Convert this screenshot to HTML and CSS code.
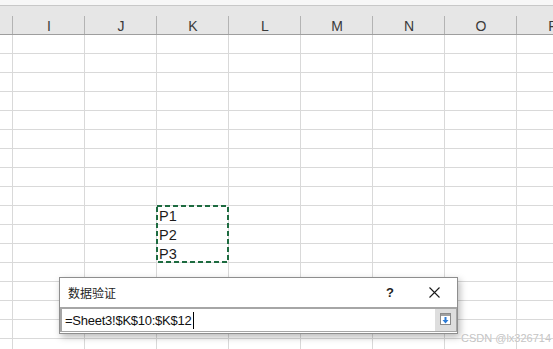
FILE: index.html
```html
<!DOCTYPE html>
<html lang="zh-CN">

<head>
  <meta charset="UTF-8">
  <meta name="viewport" content="width=device-width, initial-scale=1.0">
  <title>数据验证</title>

  <link rel="stylesheet" href="styles.css">
</head>

<body>
  <main class="sheet">
    <div class="ribbon-edge"></div>

    <div class="col-heads">
      <div class="col-head"></div>
      <div class="col-head">I</div>
      <div class="col-head">J</div>
      <div class="col-head">K</div>
      <div class="col-head">L</div>
      <div class="col-head">M</div>
      <div class="col-head">N</div>
      <div class="col-head">O</div>
      <div class="col-head">P</div>
    </div>

    <div class="grid">
      <div class="row"><div class="cell"></div><div class="cell"></div><div class="cell"></div><div class="cell"></div><div class="cell"></div><div class="cell"></div><div class="cell"></div><div class="cell"></div><div class="cell"></div></div>
      <div class="row"><div class="cell"></div><div class="cell"></div><div class="cell"></div><div class="cell"></div><div class="cell"></div><div class="cell"></div><div class="cell"></div><div class="cell"></div><div class="cell"></div></div>
      <div class="row"><div class="cell"></div><div class="cell"></div><div class="cell"></div><div class="cell"></div><div class="cell"></div><div class="cell"></div><div class="cell"></div><div class="cell"></div><div class="cell"></div></div>
      <div class="row"><div class="cell"></div><div class="cell"></div><div class="cell"></div><div class="cell"></div><div class="cell"></div><div class="cell"></div><div class="cell"></div><div class="cell"></div><div class="cell"></div></div>
      <div class="row"><div class="cell"></div><div class="cell"></div><div class="cell"></div><div class="cell"></div><div class="cell"></div><div class="cell"></div><div class="cell"></div><div class="cell"></div><div class="cell"></div></div>
      <div class="row"><div class="cell"></div><div class="cell"></div><div class="cell"></div><div class="cell"></div><div class="cell"></div><div class="cell"></div><div class="cell"></div><div class="cell"></div><div class="cell"></div></div>
      <div class="row"><div class="cell"></div><div class="cell"></div><div class="cell"></div><div class="cell"></div><div class="cell"></div><div class="cell"></div><div class="cell"></div><div class="cell"></div><div class="cell"></div></div>
      <div class="row"><div class="cell"></div><div class="cell"></div><div class="cell"></div><div class="cell"></div><div class="cell"></div><div class="cell"></div><div class="cell"></div><div class="cell"></div><div class="cell"></div></div>
      <div class="row"><div class="cell"></div><div class="cell"></div><div class="cell"></div><div class="cell"></div><div class="cell"></div><div class="cell"></div><div class="cell"></div><div class="cell"></div><div class="cell"></div></div>
      <div class="row"><div class="cell"></div><div class="cell"></div><div class="cell"></div><div class="cell val">P1</div><div class="cell"></div><div class="cell"></div><div class="cell"></div><div class="cell"></div><div class="cell"></div></div>
      <div class="row"><div class="cell"></div><div class="cell"></div><div class="cell"></div><div class="cell val">P2</div><div class="cell"></div><div class="cell"></div><div class="cell"></div><div class="cell"></div><div class="cell"></div></div>
      <div class="row"><div class="cell"></div><div class="cell"></div><div class="cell"></div><div class="cell val">P3</div><div class="cell"></div><div class="cell"></div><div class="cell"></div><div class="cell"></div><div class="cell"></div></div>
      <div class="row"><div class="cell"></div><div class="cell"></div><div class="cell"></div><div class="cell"></div><div class="cell"></div><div class="cell"></div><div class="cell"></div><div class="cell"></div><div class="cell"></div></div>
      <div class="row"><div class="cell"></div><div class="cell"></div><div class="cell"></div><div class="cell"></div><div class="cell"></div><div class="cell"></div><div class="cell"></div><div class="cell"></div><div class="cell"></div></div>
      <div class="row"><div class="cell"></div><div class="cell"></div><div class="cell"></div><div class="cell"></div><div class="cell"></div><div class="cell"></div><div class="cell"></div><div class="cell"></div><div class="cell"></div></div>
      <div class="row"><div class="cell"></div><div class="cell"></div><div class="cell"></div><div class="cell"></div><div class="cell"></div><div class="cell"></div><div class="cell"></div><div class="cell"></div><div class="cell"></div></div>
      <div class="row"><div class="cell"></div><div class="cell"></div><div class="cell"></div><div class="cell"></div><div class="cell"></div><div class="cell"></div><div class="cell"></div><div class="cell"></div><div class="cell"></div></div>
    </div>

    <!-- copy marquee around K10:K12 -->
    <svg class="marquee" width="73" height="58" viewBox="0 0 73 58">
      <rect x="1" y="1" width="71" height="56" fill="none" stroke="#1d6b40" stroke-width="2" stroke-dasharray="5 3" />
    </svg>

    <section class="dialog">
      <div class="dialog-title">
        <span class="title-text">数据验证</span>
        <span class="help">?</span>
        <span class="close">
          <svg width="11" height="11" viewBox="0 0 11 11">
            <path d="M0.5 0.5L10.5 10.5M10.5 0.5L0.5 10.5" stroke="#1a1a1a" stroke-width="1.1" />
          </svg>
        </span>
      </div>
      <div class="ref-row">
        <div class="ref-input">=Sheet3!$K$10:$K$12<span class="caret"></span></div>
        <div class="ref-btn">
          <svg width="11" height="12" viewBox="0 0 11 12">
            <rect x="0.5" y="0.5" width="10" height="11" fill="#fff" stroke="#8a8a8a" />
            <rect x="1" y="1" width="9" height="2" fill="#a0a0a0" />
            <path d="M4.5 4h2v3h2l-3 3.5-3-3.5h2z" fill="#2b7bd6" />
          </svg>
        </div>
      </div>
    </section>

    <div class="watermark">CSDN @lx326714</div>
  </main>
</body>

</html>
```

FILE: styles.css
```css
* {
  box-sizing: border-box;
}

body {
  background: #fff;
  font-family: "Liberation Sans", Arial, sans-serif;
  height: 349px;
  margin: 0;
  overflow: hidden;
  width: 553px;
}

.sheet {
  height: 349px;
  overflow: hidden;
  position: relative;
  width: 553px;
}

.ribbon-edge {
  background: #f7f7f7;
  border-bottom: 1px solid #c8c8c8;
  height: 6px;
}

.col-heads,
.row {
  display: grid;
  grid-template-columns: 13px repeat(8, 72px);
}

.col-head {
  background: linear-gradient(#b3b3b3, #b3b3b3) right bottom / 1px 18px no-repeat, #e6e6e6;
  border-bottom: 1px solid #9e9e9e;
  color: #3a3a3a;
  font-size: 14px;
  height: 29px;
  line-height: 16px;
  overflow: hidden;
  padding-top: 12px;
  text-align: center;
}

.cell {
  border-bottom: 1px solid #d9d9d9;
  border-right: 1px solid #d9d9d9;
  color: #1c1c1c;
  font-size: 14px;
  height: 19px;
  line-height: 20px;
  white-space: nowrap;
}

.cell.val {
  font-size: 14.5px;
  padding-left: 2px;
}

.marquee {
  left: 156px;
  position: absolute;
  top: 205px;
}

.dialog {
  background: #fff;
  border: 1px solid #8e8e8e;
  box-shadow: 2px 3px 7px rgba(0, 0, 0, 0.28);
  height: 57px;
  left: 59px;
  padding-bottom: 1px;
  position: absolute;
  top: 277px;
  width: 399px;
}

.dialog-title {
  align-items: center;
  display: flex;
  height: 29px;
}

.title-text {
  color: #1e1e1e;
  flex: 1;
  font-family: "Noto Sans CJK SC", sans-serif;
  font-size: 12px;
  padding-left: 8px;
}

.help {
  color: #1e1e1e;
  font-size: 13px;
  font-weight: bold;
  text-align: center;
  width: 44px;
}

.close {
  display: flex;
  justify-content: center;
  width: 45px;
}

.ref-row {
  border: 1px solid #a6a6a6;
  border-left-width: 2px;
  border-top-width: 2px;
  display: flex;
  height: 25px;
}

.ref-input {
  color: #111;
  flex: 1;
  font-size: 13px;
  letter-spacing: -0.25px;
  line-height: 22px;
  padding-left: 3px;
  padding-top: 1px;
  white-space: nowrap;
}

.caret {
  background: #000;
  display: inline-block;
  height: 17px;
  margin-left: 2px;
  vertical-align: -4px;
  width: 1px;
}

.ref-btn {
  align-items: center;
  background: #dedede;
  display: flex;
  justify-content: center;
  padding-bottom: 2px;
  width: 21px;
}

.watermark {
  color: #c4c4c4;
  font-size: 11px;
  left: 461px;
  position: absolute;
  text-shadow: 0 0 1px #fff;
  top: 332px;
}
```
